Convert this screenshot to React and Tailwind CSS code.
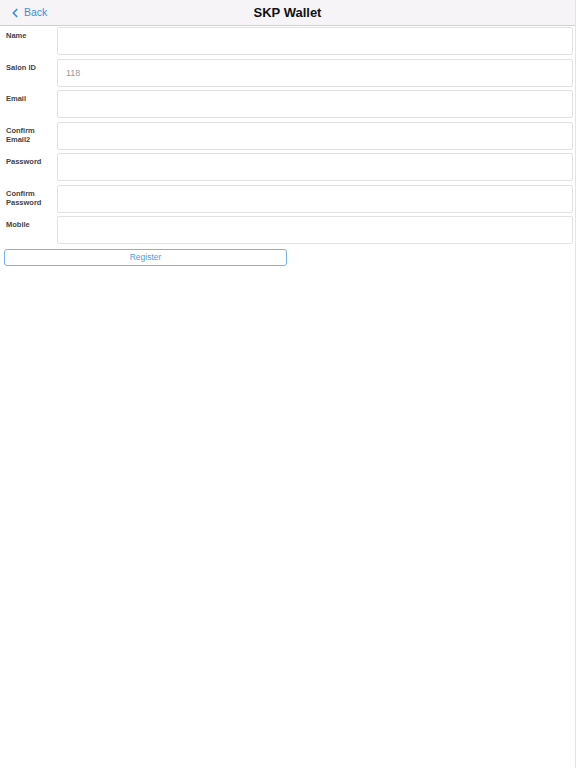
import { ChevronLeft } from "lucide-react";

const FIELDS = [
  { id: "name", label: "Name" },
  { id: "salon", label: "Salon ID", placeholder: "118" },
  { id: "email", label: "Email" },
  { id: "email2", label: "Confirm Email2" },
  { id: "password", label: "Password" },
  { id: "password2", label: "Confirm Password" },
  { id: "mobile", label: "Mobile" },
];

export default function App() {
  return (
    <div
      className="min-h-[768px] bg-white border-r border-[#e4e4e4]"
      style={{ fontFamily: '"Liberation Sans", Arial, sans-serif' }}
    >
      {/* Header */}
      <div className="relative h-[26px] bg-[#f6f4f6] border-b border-[#e6c4c9] flex items-center justify-center">
        <button className="absolute left-[8px] top-0 h-[25px] flex items-center text-[#3b8ee8] text-[10.5px]">
          <ChevronLeft className="w-[14px] h-[14px]" strokeWidth={3} />
          <span className="ml-[2px]">Back</span>
        </button>
        <span className="text-[13px] font-bold text-[#111]">SKP Wallet</span>
      </div>

      {/* Form */}
      <div className="pt-[1px] flex flex-col gap-[3.5px]">
        {FIELDS.map((f) => (
          <div key={f.id} className="flex items-start">
            <label className="w-[57px] pl-[6px] pt-[4px] text-[7.5px] font-semibold text-[#444] leading-[9px] pr-[10px]">
              {f.label}
            </label>
            <input
              className="h-[28px] w-[516px] border border-[#e2e2e2] rounded-[2px] px-[8px] text-[9px] text-[#666] outline-none placeholder:text-[#999]"
              placeholder={f.placeholder}
            />
          </div>
        ))}
      </div>

      <div className="px-[4px] pt-[5px]">
        <button className="w-[283px] h-[17px] border border-[#73b6ea] rounded-[3px] text-[8.5px] text-[#4f9de0] flex items-center justify-center">
          Register
        </button>
      </div>
    </div>
  );
}
